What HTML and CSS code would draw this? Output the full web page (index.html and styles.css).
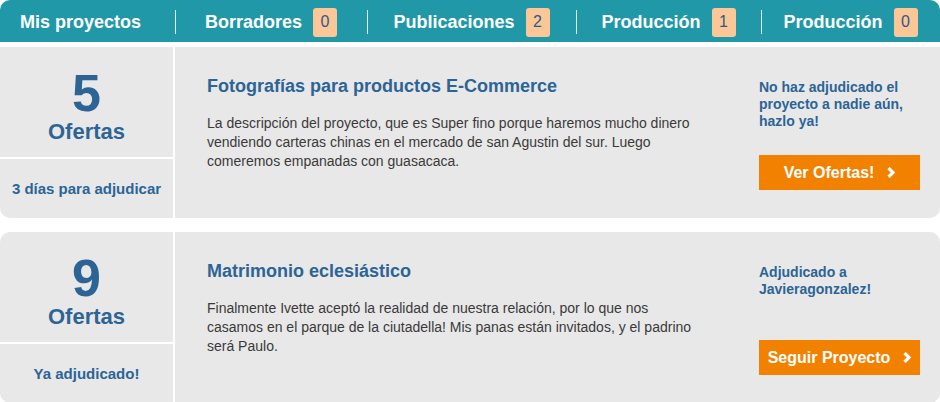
FILE: index.html
```html
<!DOCTYPE html>
<html lang="es">
<head>
<meta charset="utf-8">
<title>Mis proyectos</title>
<link rel="stylesheet" href="styles.css">
</head>
<body>
<div class="page">
  <nav class="tabs">
    <div class="tab tab-first"><span class="tab-label">Mis proyectos</span></div>
    <div class="tab tab-w2"><span class="tab-label">Borradores</span><span class="badge">0</span></div>
    <div class="tab tab-w3"><span class="tab-label">Publicaciones</span><span class="badge">2</span></div>
    <div class="tab tab-w4"><span class="tab-label">Producción</span><span class="badge">1</span></div>
    <div class="tab tab-w5"><span class="tab-label">Producción</span><span class="badge">0</span></div>
  </nav>

  <section class="card card-first">
    <div class="offers">
      <div class="offers-top">
        <div class="offers-num">5</div>
        <div class="offers-label">Ofertas</div>
      </div>
      <div class="offers-bottom">3 días para adjudicar</div>
    </div>
    <div class="info">
      <h2 class="title">Fotografías para productos E-Commerce</h2>
      <p class="desc">La descripción del proyecto, que es Super fino porque haremos mucho dinero vendiendo carteras chinas en el mercado de san Agustin del sur. Luego comeremos empanadas con guasacaca.</p>
    </div>
    <div class="action">
      <p class="status">No haz adjudicado el proyecto a nadie aún, hazlo ya!</p>
      <a class="btn" href="#">Ver Ofertas!<svg class="chev" width="8" height="11" viewBox="0 0 8 11"><path d="M1.5 1 L6 5.5 L1.5 10" fill="none" stroke="#fff" stroke-width="3.2"/></svg></a>
    </div>
  </section>

  <section class="card card-second">
    <div class="offers">
      <div class="offers-top">
        <div class="offers-num">9</div>
        <div class="offers-label">Ofertas</div>
      </div>
      <div class="offers-bottom">Ya adjudicado!</div>
    </div>
    <div class="info">
      <h2 class="title">Matrimonio eclesiástico</h2>
      <p class="desc">Finalmente Ivette aceptó la realidad de nuestra relación, por lo que nos casamos en el parque de la ciutadella! Mis panas están invitados, y el padrino será Paulo.</p>
    </div>
    <div class="action">
      <p class="status">Adjudicado a Javieragonzalez!</p>
      <a class="btn" href="#">Seguir Proyecto<svg class="chev" width="8" height="11" viewBox="0 0 8 11"><path d="M1.5 1 L6 5.5 L1.5 10" fill="none" stroke="#fff" stroke-width="3.2"/></svg></a>
    </div>
  </section>
</div>
</body>
</html>
```

FILE: styles.css
```css
* { box-sizing: border-box; }
html, body { margin: 0; padding: 0; background: #fff; }
body { font-family: "Liberation Sans", Arial, Helvetica, sans-serif; }
.page { width: 940px; }

.tabs {
  display: grid;
  grid-template-columns: 175px 192px 209px 185px 1fr;
  height: 42px;
  padding-top: 2px;
  background: #2098a7;
  border-radius: 10px 10px 0 0;
}
.tab {
  display: flex;
  align-items: center;
  justify-content: center;
  color: #fff;
  font-weight: bold;
  font-size: 18px;
  background: linear-gradient(rgba(255,255,255,0.85), rgba(255,255,255,0.85)) left center / 1px 24px no-repeat;
}
.tab-first { background: none; justify-content: flex-start; padding-left: 20px; }
.badge {
  display: inline-flex;
  align-items: center;
  justify-content: center;
  width: 24px;
  height: 29px;
  margin-left: 11px;
  background: #fcc797;
  color: #2b5a8e;
  border-radius: 3px;
  font-weight: normal;
  font-size: 16px;
}

.card {
  display: grid;
  grid-template-columns: 175px 1fr 181px;
  height: 171px;
  background: #e8e8e8;
}
.card-first { margin-top: 5px; border-radius: 0 0 10px 10px; }
.card-second { margin-top: 14px; border-radius: 10px; }

.offers {
  display: flex;
  flex-direction: column;
  border-right: 2px solid #fff;
  color: #2c6496;
  text-align: center;
  font-weight: bold;
}
.offers-top {
  height: 112px;
  border-bottom: 2px solid #fff;
  display: flex;
  flex-direction: column;
  align-items: center;
  padding-top: 20px;
}
.offers-num { font-size: 52px; line-height: 52px; }
.offers-label { font-size: 22px; line-height: 26px; }
.offers-bottom {
  flex: 1;
  display: flex;
  align-items: center;
  justify-content: center;
  font-size: 15px;
}

.info { padding: 28px 20px 0 32px; }
.title {
  margin: 0;
  font-size: 18px;
  line-height: 22px;
  color: #2c6496;
  font-weight: bold;
}
.desc {
  margin: 17px 0 0;
  max-width: 495px;
  font-size: 14px;
  line-height: 19px;
  color: #3a3a3a;
}

.action {
  display: flex;
  flex-direction: column;
  justify-content: space-between;
  padding: 32px 20px 28px 0;
}
.status {
  margin: 0;
  font-size: 14px;
  line-height: 17px;
  color: #2c6496;
  font-weight: bold;
}
.btn {
  display: flex;
  align-items: center;
  justify-content: center;
  height: 35px;
  background: #f38100;
  color: #fff;
  font-size: 16px;
  font-weight: bold;
  text-decoration: none;
}
.chev { margin-left: 13px; }
```
